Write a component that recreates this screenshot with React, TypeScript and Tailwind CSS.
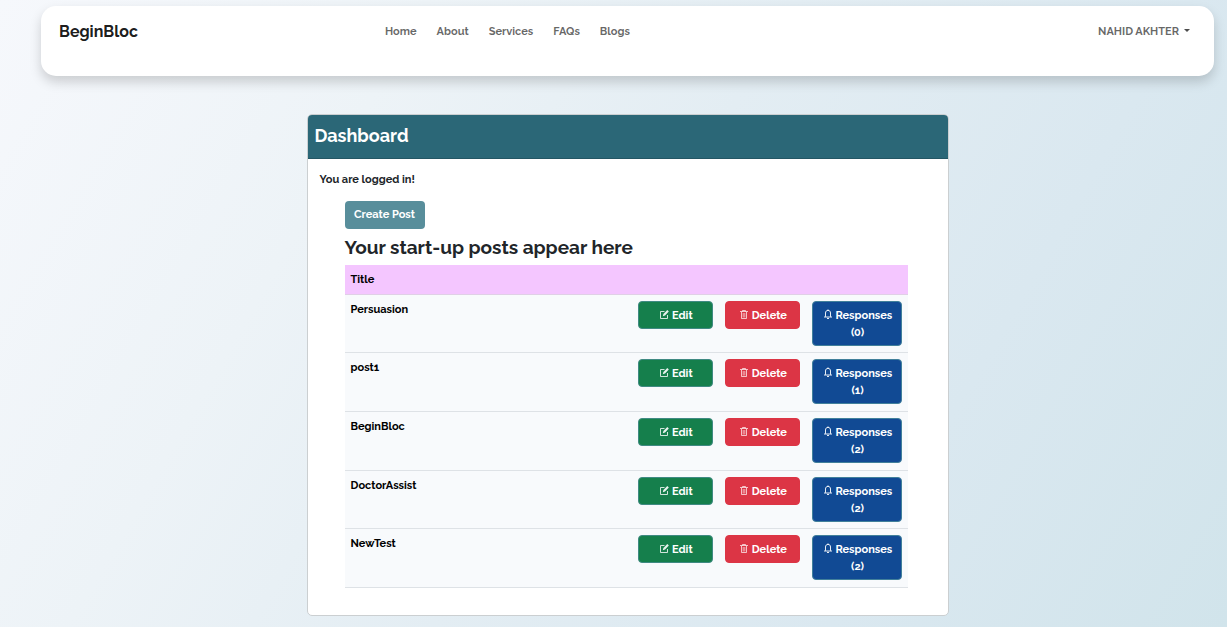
import type { ReactNode } from "react";

const links = ["Home", "About", "Services", "FAQs", "Blogs"];

const posts = [
  { title: "Persuasion", responses: 0 },
  { title: "post1", responses: 1 },
  { title: "BeginBloc", responses: 2 },
  { title: "DoctorAssist", responses: 2 },
  { title: "NewTest", responses: 2 },
];

function Icon({ children }: { children: ReactNode }) {
  return (
    <svg
      viewBox="0 0 10 10"
      className="inline size-[10px] align-baseline"
      fill="none"
      stroke="currentColor"
      aria-hidden
    >
      {children}
    </svg>
  );
}

function EditIcon() {
  return (
    <Icon>
      <path d="M5.5 2.5H1.5V9.5H8.5V6" strokeOpacity="0.8" />
      <path d="M3.8 7.3L4.4 5L8.3 1L9.8 2.5L6 6.6Z" fill="currentColor" stroke="none" fillOpacity="0.9" />
    </Icon>
  );
}

function TrashIcon() {
  return (
    <Icon>
      <path d="M1 2.5H9M3.5 2.5V1.5H6.5V2.5" strokeOpacity="0.7" />
      <path d="M2.5 3V9.5H7.5V3" strokeOpacity="0.7" />
      <path d="M4.2 4V8.5M5.8 4V8.5" strokeOpacity="0.6" />
    </Icon>
  );
}

function BellIcon() {
  return (
    <Icon>
      <path d="M1 8H9M2.5 7.8V4C2.5 2.3 3.5 1.4 5 1.4S7.5 2.3 7.5 4V7.8" strokeOpacity="0.9" />
      <path d="M5 0.5V1.5M4 9.4H6" />
    </Icon>
  );
}

function ActionButton({ className, children }: { className: string; children: ReactNode }) {
  return (
    <button
      type="button"
      className={`block w-full rounded-[4px] border pt-[5px] pr-2 pb-1 pl-2.5 text-center text-[11px] leading-[17px] font-bold text-white ${className}`}
    >
      {children}
    </button>
  );
}

function Navbar() {
  return (
    <header className="flex h-[70px] items-start justify-between rounded-[15px] bg-white pt-[11px] pr-6 pl-[18px] shadow-[0_6px_12px_rgba(0,0,0,0.17)]">
      <a href="#" className="w-[326px] text-[16px] leading-[29px] font-bold text-black/90">
        BeginBloc
      </a>
      <nav className="flex flex-1 gap-5 text-[11px] leading-[29px] font-bold text-black/60">
        {links.map((link) => (
          <a key={link} href="#">
            {link}
          </a>
        ))}
      </nav>
      <button
        type="button"
        className="flex items-center gap-[5px] text-[11px] leading-[29px] font-bold text-black/60"
      >
        NAHID AKHTER
        <span className="mb-0.5 border-x-[3px] border-t-[3px] border-x-transparent border-t-black/70" />
      </button>
    </header>
  );
}

export default function App() {
  return (
    <div className="min-h-screen bg-[linear-gradient(120deg,#f6f8fc_0%,#edf3f7_27%,#e3edf3_50%,#dae8f0_75%,#d1e4eb_100%)] pt-1.5 pr-[13px] pb-[11px] pl-[41px] font-['Raleway','Open_Sans',sans-serif] text-[11px] text-[#212529]">
      <Navbar />
      <main className="mx-auto mt-[38px] w-full max-w-[642px] overflow-hidden rounded-[5px] border border-[#cbcfd1] bg-white">
        <h1 className="border-b border-[#245664] bg-[#2b6777] px-[7px] pt-2 pb-[10px] text-[18px] leading-[25px] font-bold text-white">
          Dashboard
        </h1>
        <div className="px-3 pt-3 pb-[27px] font-bold">
          <p className="leading-[17px]">You are logged in!</p>
          <section className="mt-[13px] pr-7 pl-[25px]">
            <button
              type="button"
              className="h-7 w-20 rounded-[4px] bg-[#588e9b] text-[11px] font-bold text-white"
            >
              Create Post
            </button>
            <h2 className="mt-1.5 mb-[6px] text-[19px] leading-6 font-bold">
              Your start-up posts appear here
            </h2>
            <table className="h-[323px] w-full table-fixed border-collapse text-left text-black">
              <thead>
                <tr className="h-[29px] border-b border-[#e0cfe6] bg-[#f4c6ff]">
                  <th scope="col" className="px-1.5 pt-0.5 font-bold">
                    Title
                  </th>
                  <th scope="col" aria-label="Edit" className="w-[87px]" />
                  <th scope="col" aria-label="Delete" className="w-[87px]" />
                  <th scope="col" aria-label="Responses" className="w-[102px]" />
                </tr>
              </thead>
              <tbody>
                {posts.map((post) => (
                  <tr key={post.title} className="border-b border-[#dee2e6] bg-[#f8fafc] align-top">
                    <td className="px-1.5 py-1.5 leading-[17px]">{post.title}</td>
                    <td className="p-1.5">
                      <ActionButton className="border-[#3f8a82] bg-[#157f4c]">
                        <EditIcon /> Edit
                      </ActionButton>
                    </td>
                    <td className="p-1.5">
                      <ActionButton className="border-[#dc3545] bg-[#dc3545]">
                        <TrashIcon /> Delete
                      </ActionButton>
                    </td>
                    <td className="p-1.5">
                      <ActionButton className="border-[#41809b] bg-[#114a94]">
                        <BellIcon /> {`Responses (${post.responses})`}
                      </ActionButton>
                    </td>
                  </tr>
                ))}
              </tbody>
            </table>
          </section>
        </div>
      </main>
    </div>
  );
}
